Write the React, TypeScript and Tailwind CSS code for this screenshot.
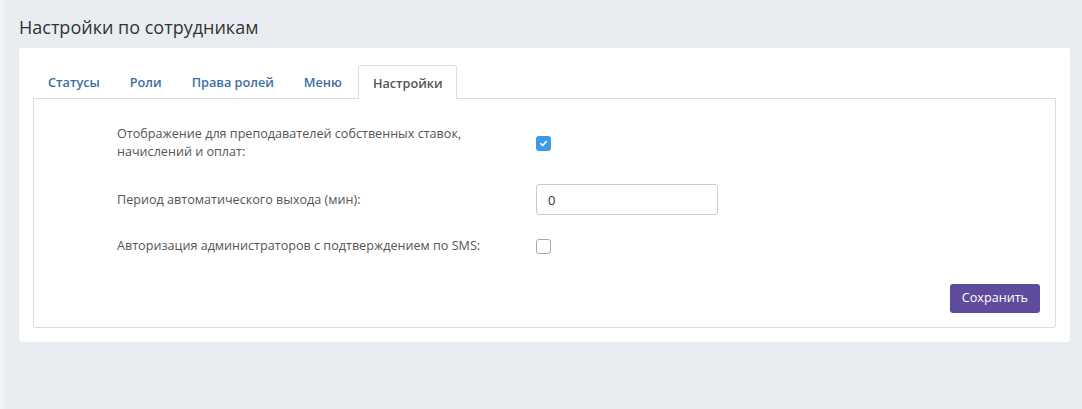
import React from 'react';

const tabs = ['Статусы', 'Роли', 'Права ролей', 'Меню'];

const CheckBox: React.FC<{ checked?: boolean }> = ({ checked }) =>
  checked ? (
    <span className="flex h-[15px] w-[15px] items-center justify-center rounded-[3px] bg-[#3d9be4]">
      <svg width="9" height="9" viewBox="0 0 10 10">
        <path d="M2 5.2 L4.2 7.2 L8 2.8" fill="none" stroke="#fff" strokeWidth="1.8" strokeLinecap="round" strokeLinejoin="round" />
      </svg>
    </span>
  ) : (
    <span className="block h-[15px] w-[15px] rounded-[3px] border border-[#a9a9a9] bg-white" />
  );

export default function App() {
  return (
    <div className="flex h-[409px] w-full bg-[#e9ecf1] font-['Open_Sans',sans-serif] text-[12.6px] text-[#555]">
      <div className="w-[4px] bg-[#f0f2f5]" />
      <div className="flex-1 pl-[15px] pr-[12px]">
        <h1 className="pt-[14px] pb-[8px] text-[18px] leading-[26px] text-[#333]">Настройки по сотрудникам</h1>
        <div className="rounded-[3px] bg-white px-[14px] pt-[17px] pb-[14px]">
          <div className="flex items-end border-b border-[#ddd] text-[12.7px] leading-[18px]">
            {tabs.map((t) => (
              <span key={t} className="px-[15px] pb-[7px] font-semibold text-[#3c6ea3]">{t}</span>
            ))}
            <span className="-mb-px ml-px rounded-t-[3px] border border-b-0 border-[#ddd] bg-white pl-[14px] pr-[13px] pt-[8px] pb-[7px] font-semibold text-[#555]">
              Настройки
            </span>
          </div>
          <div className="rounded-b-[3px] border border-t-0 border-[#ddd] pl-[83px] pr-[15px] pt-[26px] pb-[14px]">
            <div className="grid grid-cols-[419px_182px] items-center leading-[18px]">
              <div>
                Отображение для преподавателей собственных ставок,<br />начислений и оплат:
              </div>
              <CheckBox checked />
              <div className="mt-[23px]">Период автоматического выхода (мин):</div>
              <div className="mt-[23px] flex h-[31px] items-center rounded-[3px] border border-[#ccc] px-[11px] text-[13px] text-[#333]">0</div>
              <div className="mt-[22px]">Авторизация администраторов с подтверждением по SMS:</div>
              <div className="mt-[22px]">
                <CheckBox />
              </div>
            </div>
            <div className="mt-[29px] flex justify-end">
              <button className="h-[29px] rounded-[3px] bg-[#5f4b9c] px-[12px] text-[12.6px] text-white">Сохранить</button>
            </div>
          </div>
        </div>
      </div>
    </div>
  );
}
